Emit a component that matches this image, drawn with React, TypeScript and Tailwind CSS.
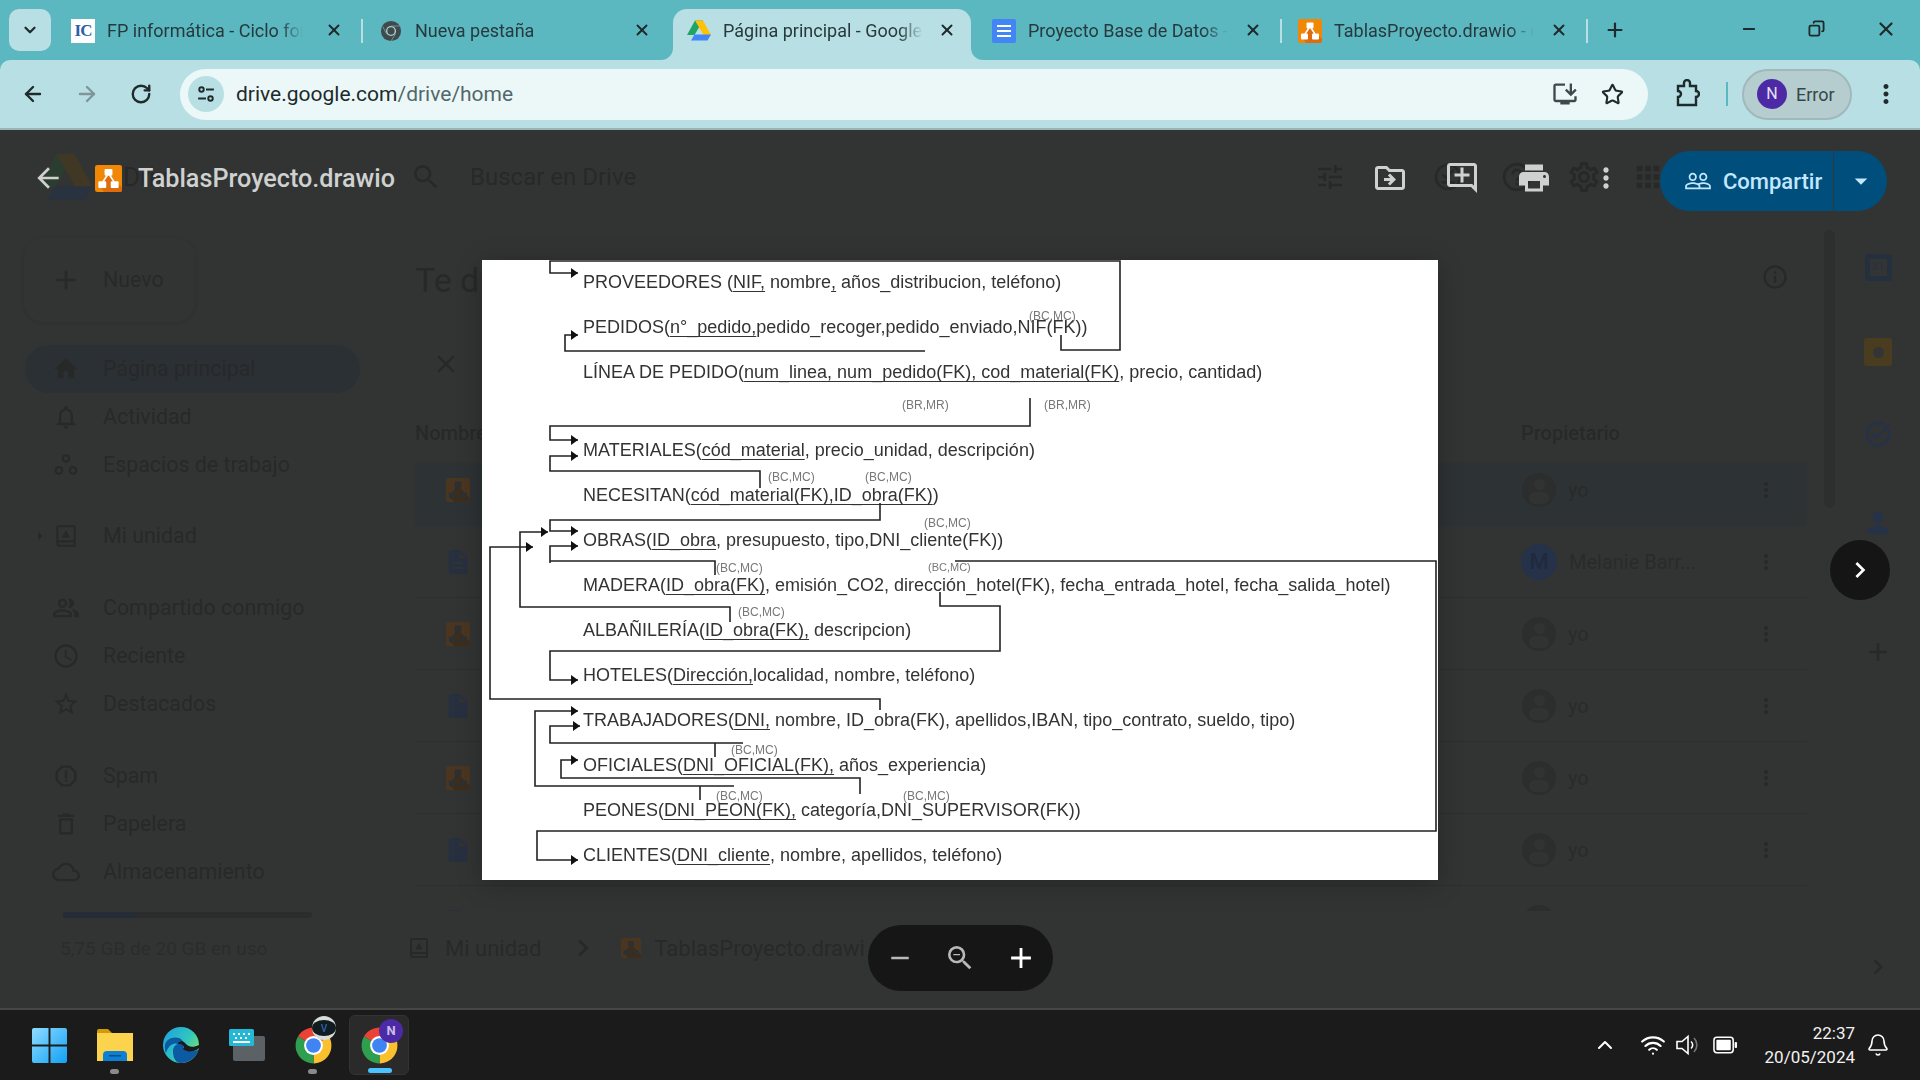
import React from "react";
import { ArrowLeft, ArrowRight, RotateCw, X, Plus, Minus, ChevronDown, ChevronUp, Star, Wifi, Bell, Copy } from "lucide-react";
import {
  MdAdd, MdHome, MdNotificationsNone, MdOutlinePeopleAlt, MdAccessTime, MdStarBorder, MdOutlineReport, MdDeleteOutline,
  MdOutlineCloud, MdPrint, MdOutlineAddComment, MdOutlineSettings, MdMoreVert, MdApps, MdPeopleOutline, MdArrowBack, MdSearch,
  MdClose, MdInfoOutline, MdArrowDropDown, MdChevronRight, MdZoomOut, MdRemove, MdTune, MdOutlineDriveFileMove,
  MdInsertDriveFile, MdInstallDesktop, MdArrowRight, MdOutlineTaskAlt, MdPerson, MdOutlineHelpOutline, MdOutlineOfflinePin,
  MdDescription,
} from "react-icons/md";

const Drawio = ({ className = "", dim = false }: { className?: string; dim?: boolean }) => (
  <svg viewBox="0 0 24 24" className={className}>
    <rect width="24" height="24" rx="2" fill={dim ? "#4a3520" : "#f08705"} />
    <path d="M12 8 L24 20 V22 a2 2 0 0 1 -2 2 H8 L4 18z" fill={dim ? "#3f2d1c" : "#df6c0c"} />
    <g fill={dim ? "#2f3130" : "#fff"}>
      <rect x="8.5" y="3.5" width="7" height="6" rx="1" />
      <rect x="3" y="14.5" width="7" height="6" rx="1" />
      <rect x="14" y="14.5" width="7" height="6" rx="1" />
    </g>
    <path d="M11 9 L7 15 M13 9 L17 15" stroke={dim ? "#2f3130" : "#fff"} strokeWidth="1.6" />
  </svg>
);

const DriveLogo = ({ className = "", dim = false }: { className?: string; dim?: boolean }) => (
  <svg viewBox="0 0 48 42" className={className}>
    <path d="M16 1 H32 L15 30 H0 z" fill={dim ? "#2b3d31" : "#1fa463"} />
    <path d="M16 1 H32 L48 30 H33 z" fill={dim ? "#403824" : "#ffc107"} />
    <path d="M8 41 L15 29 H48 L41 41 z" fill={dim ? "#29323f" : "#4285f4"} />
  </svg>
);

const MyDrive = ({ className = "" }: { className?: string }) => (
  <svg viewBox="0 0 24 24" className={className} fill="none" stroke="currentColor" strokeWidth="2">
    <path d="M4 19 V4 a1 1 0 0 1 1 -1 H19 a1 1 0 0 1 1 1 V21 H6 a2 2 0 0 1 0 -4 H20" />
    <path d="M9 13 L12 7.5 L15 13z" fill="currentColor" strokeWidth="1" />
  </svg>
);

const Chrome = ({ className = "" }: { className?: string }) => (
  <svg viewBox="0 0 48 48" className={className}>
    <path d="M24 24 L6.68 14 A20 20 0 0 1 41.32 14 z" fill="#ea4335" />
    <path d="M24 24 L41.32 14 A20 20 0 0 1 24 44 z" fill="#fbc02d" />
    <path d="M24 24 L24 44 A20 20 0 0 1 6.68 14 z" fill="#2e9e4f" />
    <circle cx="24" cy="24" r="10.5" fill="#fff" />
    <circle cx="24" cy="24" r="8.2" fill="#3f84f2" />
  </svg>
);

const GreyChrome = () => (
  <svg viewBox="0 0 48 48" className="size-[22px]">
    <circle cx="24" cy="24" r="22" fill="#3f4a4c" />
    <circle cx="24" cy="24" r="11" fill="#b8e0e4" opacity="0.9" />
    <circle cx="24" cy="24" r="8" fill="#3f4a4c" />
    <path d="M24 13 H44 M14 30 L6 14 M34 30 L24 46" stroke="#7d9194" strokeWidth="2" />
  </svg>
);

const Tab = ({ width, icon, label, textWidth, active, sep }: { width: string; icon: React.ReactNode; label: string; textWidth: string; active?: boolean; sep?: boolean }) => (
  <div className={`relative h-[51px] flex items-center pl-[14px] pb-[8px] shrink-0 ${width} ${active ? "bg-[#b8e0e4] rounded-t-[14px]" : ""}`}>
    {active && (
      <>
        <div className="absolute bottom-0 -left-[12px] size-[12px] bg-[#b8e0e4]">
          <div className="size-full bg-[#5bb8c1] rounded-br-[12px]" />
        </div>
        <div className="absolute bottom-0 -right-[12px] size-[12px] bg-[#b8e0e4]">
          <div className="size-full bg-[#5bb8c1] rounded-bl-[12px]" />
        </div>
      </>
    )}
    <div className="size-[24px] flex items-center justify-center shrink-0">{icon}</div>
    <div className={`ml-[12px] overflow-hidden whitespace-nowrap text-[18px] text-[#27393c] [mask-image:linear-gradient(to_right,black_88%,transparent)] ${textWidth}`}>{label}</div>
    <X className={`absolute top-[12px] size-[18px] text-[#1f2a2c] ${active ? "right-[15px]" : "right-[22px]"}`} strokeWidth={2.6} />
    {sep && <div className="absolute right-[2px] top-[10px] w-[2px] h-[24px] bg-[#b8e0e4]" />}
  </div>
);

const TabStrip = () => (
  <div className="h-[60px] bg-[#5bb8c1] flex items-end pl-[9px]">
    <div className="w-[42px] h-[42px] mb-[9px] mr-[6px] rounded-[10px] bg-[#b8e0e4] flex items-center justify-center shrink-0">
      <ChevronDown className="size-[18px] text-[#1f2a2c]" strokeWidth={3} />
    </div>
    <Tab
      width="w-[308px]"
      textWidth="w-[196px]"
      label="FP informática - Ciclo form"
      sep
      icon={
        <div className="size-[24px] bg-white flex items-center justify-center text-[#2b5fa8] text-[17px] font-bold font-['Liberation_Serif',serif] tracking-[-1px]">IC</div>
      }
    />
    <Tab width="w-[308px]" textWidth="w-[200px]" label="Nueva pestaña" icon={<GreyChrome />} />
    <Tab width="w-[298px] mr-[7px]" textWidth="w-[200px]" label="Página principal - Google" active icon={<DriveLogo className="w-[24px]" />} />
    <Tab
      width="w-[306px]"
      textWidth="w-[200px]"
      label="Proyecto Base de Datos -"
      sep
      icon={
        <div className="w-[24px] h-[24px] rounded-[2px] bg-[#4285f4] flex flex-col justify-center gap-[3px] px-[5px]">
          <div className="h-[2px] bg-white" />
          <div className="h-[2px] bg-white" />
          <div className="h-[2px] bg-white" />
        </div>
      }
    />
    <Tab width="w-[306px]" textWidth="w-[200px]" label="TablasProyecto.drawio - d" sep icon={<Drawio className="size-[24px]" />} />
    <div className="h-[51px] pb-[9px] flex items-center ml-[14px]">
      <Plus className="size-[22px] text-[#1f2a2c]" strokeWidth={2.4} />
    </div>
    <div className="ml-auto h-[60px] flex items-center pb-[3px]">
      <Minus className="size-[18px] text-[#1f2a2c] mr-[50px]" strokeWidth={2.4} />
      <Copy className="size-[17px] text-[#1f2a2c] mr-[50px] -scale-x-100" strokeWidth={2.6} />
      <X className="size-[22px] text-[#1f2a2c] mr-[23px]" strokeWidth={2.4} />
    </div>
  </div>
);

const Toolbar = () => (
  <div className="bg-[#5bb8c1]">
    <div className="h-[70px] bg-[#b8e0e4] rounded-t-[10px] border-b-[2px] border-[#9db4b4] flex items-center">
      <ArrowLeft className="size-[24px] ml-[21px] text-[#1f2a2c]" strokeWidth={2.4} />
      <ArrowRight className="size-[24px] ml-[30px] text-[#7f9698]" strokeWidth={2.4} />
      <RotateCw className="size-[22px] ml-[31px] text-[#1f2a2c]" strokeWidth={2.6} />
      <div className="ml-[28px] w-[1468px] h-[51px] rounded-full bg-[#ecf8f8] flex items-center pl-[8px]">
        <div className="size-[36px] rounded-full bg-[#b8e0e4] flex flex-col items-center justify-center gap-[5px]">
          <svg viewBox="0 0 16 16" className="size-[18px]" fill="none" stroke="#1f2a2c" strokeWidth="1.7">
            <circle cx="4" cy="4" r="2" />
            <path d="M8 4 H15 M1 12 H8" />
            <circle cx="12" cy="12" r="2" />
          </svg>
        </div>
        <div className="ml-[12px] mt-[1px] text-[21px] text-[#1d2a2c]">
          drive.google.com<span className="text-[#52686b]">/drive/home</span>
        </div>
        <MdInstallDesktop className="ml-auto size-[28px] text-[#3c4a4c]" />
        <Star className="ml-[22px] mr-[24px] size-[23px] text-[#1f2a2c]" strokeWidth={2.2} />
      </div>
      <svg viewBox="0 0 24 30" className="ml-[26px] w-[26px] h-[30px]" fill="none" stroke="#1f2a2c" strokeWidth="2.4">
        <path d="M3 7 H9 V4 a3 3 0 0 1 6 0 V7 H21 V12 a3 3 0 0 1 0 6 V26 H3 V18 a3 3 0 0 0 0 -6 z" />
      </svg>
      <div className="ml-[26px] w-[2px] h-[24px] bg-[#5bb8c1]" />
      <div className="ml-[14px] w-[110px] h-[51px] rounded-full bg-[#b6cdd0] border-[2px] border-[#a1b8ba] flex items-center pl-[13px]">
        <div className="size-[30px] rounded-full bg-[#4c2aa5] text-[#e7e0f5] text-[16px] flex items-center justify-center">N</div>
        <div className="ml-[9px] text-[18px] text-[#33474a]">Error</div>
      </div>
      <MdMoreVert className="ml-[19px] size-[30px] text-[#1f2a2c]" />
    </div>
  </div>
);

const NavItem = ({ icon, label, active }: { icon: React.ReactNode; label: string; active?: boolean }) => (
  <div className={`h-[48px] w-[335px] ml-[25px] rounded-full flex items-center pl-[27px] ${active ? "bg-[#2b3035]" : ""}`}>
    <div className="w-[28px] flex justify-center text-[#272928]">{icon}</div>
    <div className="ml-[23px] mt-[1px] text-[21.4px] text-[#272928]">{label}</div>
  </div>
);

const rows = [
  { id: 1, icon: <Drawio dim className="size-[24px]" />, selected: true },
  { id: 2, icon: <MdDescription className="size-[28px] -mx-[2px] text-[#26303f]" />, owner: "Melanie Barr..." },
  { id: 3, icon: <Drawio dim className="size-[24px]" /> },
  { id: 4, icon: <MdInsertDriveFile className="size-[28px] -mx-[2px] text-[#26303f]" /> },
  { id: 5, icon: <Drawio dim className="size-[24px]" /> },
  { id: 6, icon: <MdInsertDriveFile className="size-[28px] -mx-[2px] text-[#26303f]" /> },
  { id: 7, icon: <MdInsertDriveFile className="size-[28px] -mx-[2px] text-[#26303f]" /> },
];

const DriveLayer = () => (
  <div className="h-full flex flex-col text-[#272928]">
    <div className="h-[94px] flex items-center shrink-0">
      <DriveLogo dim className="w-[55px] ml-[38px]" />
      <div className="ml-[30px] text-[26px] w-[232px]">Drive</div>
      <MdSearch className="size-[32px] ml-[55px]" />
      <div className="ml-[28px] text-[24px]">Buscar en Drive</div>
      <div className="ml-auto flex items-center mr-[255px]">
        <MdTune className="size-[32px] mr-[86px]" />
        <MdOutlineOfflinePin className="size-[32px] mr-[36px]" />
        <MdOutlineHelpOutline className="size-[34px] mr-[32px]" />
        <MdOutlineSettings className="size-[36px] mr-[29px]" />
        <MdApps className="size-[34px]" />
      </div>
    </div>
    <div className="flex-1 flex min-h-0">
      <div className="w-[415px] shrink-0">
        <div className="ml-[24px] mt-[14px] w-[171px] h-[84px] rounded-[20px] shadow-[0_1px_4px_rgba(0,0,0,0.12)] flex items-center pl-[26px]">
          <MdAdd className="size-[32px]" />
          <div className="ml-[21px] mt-[1px] text-[21.4px]">Nuevo</div>
        </div>
        <div className="mt-[23px]">
          <NavItem active icon={<MdHome className="size-[28px]" />} label="Página principal" />
          <NavItem icon={<MdNotificationsNone className="size-[28px]" />} label="Actividad" />
          <NavItem
            icon={
              <svg viewBox="0 0 24 24" className="size-[26px]" fill="none" stroke="currentColor" strokeWidth="2">
                <circle cx="12" cy="6" r="3" />
                <circle cx="5.5" cy="17" r="3" />
                <circle cx="18.5" cy="17" r="3" />
              </svg>
            }
            label="Espacios de trabajo"
          />
          <div className="relative mt-[23px]">
            <MdArrowRight className="absolute left-[30px] top-[14px] size-[20px]" />
            <NavItem icon={<MyDrive className="size-[26px]" />} label="Mi unidad" />
          </div>
          <div className="mt-[24px]">
            <NavItem icon={<MdOutlinePeopleAlt className="size-[30px]" />} label="Compartido conmigo" />
            <NavItem icon={<MdAccessTime className="size-[30px]" />} label="Reciente" />
            <NavItem icon={<MdStarBorder className="size-[30px]" />} label="Destacados" />
          </div>
          <div className="mt-[24px]">
            <NavItem icon={<MdOutlineReport className="size-[30px]" />} label="Spam" />
            <NavItem icon={<MdDeleteOutline className="size-[30px]" />} label="Papelera" />
            <NavItem icon={<MdOutlineCloud className="size-[32px]" />} label="Almacenamiento" />
          </div>
        </div>
        <div className="ml-[63px] mt-[16px] w-[249px] h-[6px] rounded-full bg-[#2b2d2c] flex">
          <div className="w-[72px] rounded-full bg-[#252c38]" />
        </div>
        <div className="ml-[60px] mt-[17px] text-[19px] text-[#2a2c2b]">5,75 GB de 20 GB en uso</div>
      </div>
      <div className="w-[1391px] shrink-0 flex flex-col">
        <div className="h-[112px] flex items-center text-[34px] shrink-0">Te d</div>
        <div className="h-[56px] flex items-center pl-[16px] shrink-0">
          <MdClose className="size-[30px]" />
        </div>
        <div className="relative h-[62px] pt-[20px] flex items-center text-[20px] font-medium shrink-0">
          <div>Nombre</div>
          <div className="ml-auto w-[285px]">Propietario</div>
          <MdInfoOutline className="absolute right-[17px] -top-[129px] size-[28px]" />
        </div>
        <div className="h-[457px] overflow-hidden shrink-0 pt-[8px]">
          {rows.map((r) => (
            <div key={r.id} className={`flex items-center pl-[31px] ${r.selected ? "h-[64px] pb-[8px] bg-[#2d3235]" : "h-[72px] border-b border-[#2d2f2e]"}`}>
              {r.icon}
              <div className="ml-auto w-[285px] flex items-center">
                {r.owner ? (
                  <div className="size-[36px] rounded-full bg-[#25324a] text-[#1f2a3d] text-[22px] font-medium flex items-center justify-center">M</div>
                ) : (
                  <div className="size-[34px] ml-[1px] rounded-full bg-[#2c2e2d] flex flex-col items-center overflow-hidden">
                    <div className="mt-[6px] size-[11px] rounded-full bg-[#313332]" />
                    <div className="mt-[2px] w-[20px] h-[12px] rounded-full bg-[#313332]" />
                  </div>
                )}
                <div className="ml-[12px] text-[20px] text-[#292b2a]">{r.owner ?? "yo"}</div>
                <MdMoreVert className="ml-auto mr-[28px] size-[24px]" />
              </div>
            </div>
          ))}
        </div>
        <div className="flex-1 flex items-center pb-[23px] -ml-[8px] text-[22px]">
          <MyDrive className="size-[24px]" />
          <div className="ml-[14px]">Mi unidad</div>
          <MdChevronRight className="size-[34px] ml-[25px] mr-[21px]" />
          <Drawio dim className="size-[20px]" />
          <div className="ml-[13px]">TablasProyecto.drawi</div>
        </div>
      </div>
      <div className="w-[39px] shrink-0 pl-[18px] pt-[6px]">
        <div className="w-[11px] h-[278px] rounded-full bg-[#2d2f2e]" />
      </div>
      <div className="w-[66px] shrink-0 flex flex-col items-center">
        <div className="mt-[30px] size-[27px] rounded-[3px] bg-[#25303f] flex items-center justify-center">
          <div className="size-[17px] bg-[#333534] text-[11px] text-[#25303f] flex items-center justify-center">31</div>
        </div>
        <div className="mt-[57px] size-[28px] rounded-[3px] bg-[#4a3d1f] flex items-center justify-center">
          <div className="size-[11px] rounded-full bg-[#333534]" />
        </div>
        <MdOutlineTaskAlt className="mt-[53px] size-[30px] text-[#25324a]" />
        <MdPerson className="mt-[58px] size-[32px] text-[#25324a]" />
        <MdAdd className="mt-[98px] size-[30px]" />
        <MdChevronRight className="mt-[285px] size-[30px]" />
      </div>
    </div>
  </div>
);

const lines = [
  "M578 273 H550 V261 H1120 V350 H1061 V335",
  "M578 335 H565 V351 H925",
  "M578 440 H550 V426 H1030 V398",
  "M578 456 H550 V471 H760 V488",
  "M578 531 H550 V520 H880 V503",
  "M548 532 H520 V607 H730 V622",
  "M533 547 H490 V699 H880 V710",
  "M578 546 H550 V563 M550 561 H715 V575",
  "M578 680 H550 V651 H1000 V606 H940 V592",
  "M955 561 H1436 V831 H537 V860 H578",
  "M578 711 H535 V786 H734 M700 786 V800",
  "M580 726 H550 V743 H743 M715 743 V757",
  "M578 760 H561 V778 H860 V794",
];
const heads = [[578, 273], [578, 335], [578, 440], [578, 456], [578, 531], [548, 532], [533, 547], [578, 546], [578, 680], [578, 860], [578, 711], [580, 726], [578, 760]];

const Diagram = () => (
  <div className="absolute left-[482px] top-[130px] w-[956px] h-[620px] bg-white overflow-hidden shadow-[0_4px_24px_rgba(0,0,0,0.25)]">
    <div className="flex flex-col pl-[101px] text-[18px] text-[#333] whitespace-nowrap font-['Liberation_Sans',Arial,sans-serif] blur-[0.5px] [&_u]:underline-offset-[3px] [&_u]:[text-decoration-skip-ink:none]">
      <div className="h-[45px] flex items-center"><p>PROVEEDORES (<u>NIF,</u> nombre<u>,</u> años_distribucion, teléfono)</p></div>
      <div className="h-[45px] flex items-center"><p>PEDIDOS(<u>n°_pedido,</u>pedido_recoger,pedido_enviado,NIF(FK))</p></div>
      <div className="h-[45px] flex items-center"><p>LÍNEA DE PEDIDO(<u>num_linea, num_pedido(FK), cod_material(FK)</u>, precio, cantidad)</p></div>
      <div className="h-[33px]" />
      <div className="h-[45px] flex items-center"><p>MATERIALES(<u>cód_material</u>, precio_unidad, descripción)</p></div>
      <div className="h-[45px] flex items-center"><p>NECESITAN(<u>cód_material(FK),ID_obra(FK)</u>)</p></div>
      <div className="h-[45px] flex items-center"><p>OBRAS(<u>ID_obra</u>, presupuesto, tipo,DNI_cliente(FK))</p></div>
      <div className="h-[45px] flex items-center"><p>MADERA(<u>ID_obra(FK)</u>, emisión_CO2, dirección_hotel(FK), fecha_entrada_hotel, fecha_salida_hotel)</p></div>
      <div className="h-[45px] flex items-center"><p>ALBAÑILERÍA(<u>ID_obra(FK),</u> descripcion)</p></div>
      <div className="h-[45px] flex items-center"><p>HOTELES(<u>Dirección,</u>localidad, nombre, teléfono)</p></div>
      <div className="h-[45px] flex items-center"><p>TRABAJADORES(<u>DNI,</u> nombre, ID_obra(FK), apellidos,IBAN, tipo_contrato, sueldo, tipo)</p></div>
      <div className="h-[45px] flex items-center"><p>OFICIALES(<u>DNI_OFICIAL(FK),</u> años_experiencia)</p></div>
      <div className="h-[45px] flex items-center"><p>PEONES(<u>DNI_PEON(FK),</u> categoría,DNI_SUPERVISOR(FK))</p></div>
      <div className="h-[45px] flex items-center"><p>CLIENTES(<u>DNI_cliente</u>, nombre, apellidos, teléfono)</p></div>
    </div>
    <svg viewBox="482 260 956 620" className="absolute inset-0 w-full h-full" fill="none" stroke="#222" strokeWidth="1.6">
      {lines.map((d) => <path key={d} d={d} />)}
      {heads.map(([x, y]) => <path key={`${x}-${y}`} d={`M${x - 7} ${y - 5} L${x} ${y} L${x - 7} ${y + 5} z`} fill="#111" stroke="none" />)}
    </svg>
    <div className="absolute inset-0 font-['Liberation_Sans',Arial,sans-serif] text-[12px] text-[#777] blur-[0.3px]">
      <span className="absolute left-[547px] top-[47px]">(BC,MC)</span>
      <span className="absolute left-[420px] top-[136px]">(BR,MR)</span>
      <span className="absolute left-[562px] top-[136px]">(BR,MR)</span>
      <span className="absolute left-[286px] top-[208px]">(BC,MC)</span>
      <span className="absolute left-[383px] top-[208px]">(BC,MC)</span>
      <span className="absolute left-[442px] top-[254px]">(BC,MC)</span>
      <span className="absolute left-[234px] top-[299px]">(BC,MC)</span>
      <span className="absolute left-[446px] top-[299px] text-[11px]">(BC,MC)</span>
      <span className="absolute left-[256px] top-[343px]">(BC,MC)</span>
      <span className="absolute left-[249px] top-[481px]">(BC,MC)</span>
      <span className="absolute left-[234px] top-[527px]">(BC,MC)</span>
      <span className="absolute left-[421px] top-[527px]">(BC,MC)</span>
    </div>
  </div>
);

const ViewerLayer = () => (
  <div className="absolute inset-0">
    <div className="h-[94px] flex items-center text-[#cfd1d0]">
      <MdArrowBack className="size-[32px] ml-[32px] mt-[2px]" />
      <Drawio className="size-[27px] ml-[31px] mt-[2px]" />
      <div className="ml-[16px] mt-[3px] text-[25.2px] font-medium">TablasProyecto.drawio</div>
      <div className="ml-auto flex items-center mt-[2px]">
        <div className="w-[72px] flex justify-center"><MdOutlineDriveFileMove className="size-[36px]" /></div>
        <div className="w-[72px] flex justify-center"><MdOutlineAddComment className="size-[36px]" /></div>
        <div className="w-[72px] flex justify-center"><MdPrint className="size-[36px]" /></div>
        <div className="w-[72px] flex justify-center"><MdMoreVert className="size-[32px]" /></div>
      </div>
      <div className="ml-[18px] mr-[33px] mt-[8px] w-[227px] h-[60px] rounded-full bg-[#004e7b] flex items-center text-[#c2e7ff]">
        <MdPeopleOutline className="ml-[24px] size-[28px]" />
        <div className="ml-[11px] text-[22px] font-medium">Compartir</div>
        <div className="ml-[11px] h-full w-px bg-[#2f3a40]" />
        <MdArrowDropDown className="ml-[12px] size-[30px]" />
      </div>
    </div>
    <Diagram />
    <div className="absolute left-[868px] top-[795px] w-[185px] h-[66px] rounded-full bg-[#161616] flex items-center justify-between pl-[17px] pr-[15px] text-white">
      <MdRemove className="size-[30px] text-[#b9b9b9]" />
      <MdZoomOut className="size-[32px] text-[#b9b9b9]" />
      <MdAdd className="size-[34px]" />
    </div>
    <div className="absolute left-[1830px] top-[410px] size-[60px] rounded-full bg-[#151515] flex items-center justify-center">
      <MdChevronRight className="size-[32px] text-white" />
    </div>
  </div>
);

const TaskIcon = ({ children, dot, active }: { children: React.ReactNode; dot?: boolean; active?: boolean }) => (
  <div className={`relative w-[60px] h-[60px] mr-[6px] rounded-[6px] flex items-center justify-center ${active ? "bg-[#2a2a2a] border border-[#333]" : ""}`}>
    {children}
    {dot && <div className="absolute bottom-[1px] left-[25px] w-[9px] h-[5px] rounded-full bg-[#8a8a8a]" />}
    {active && <div className="absolute bottom-[1px] left-[18px] w-[24px] h-[5px] rounded-full bg-[#4cc2ff]" />}
  </div>
);

const Taskbar = () => (
  <div className="h-[72px] bg-[#1b1b1b] border-t-[2px] border-[#454746] flex items-center pl-[19px] text-white">
    <TaskIcon>
      <svg viewBox="0 0 36 36" className="size-[35px]">
        <defs>
          <linearGradient id="win" x1="0" y1="0" x2="1" y2="1">
            <stop offset="0" stopColor="#8fdcff" />
            <stop offset="1" stopColor="#12a0f5" />
          </linearGradient>
        </defs>
        <path d="M0 2 a2 2 0 0 1 2 -2 H17 V17 H0z M19 0 H34 a2 2 0 0 1 2 2 V17 H19z M0 19 H17 V36 H2 a2 2 0 0 1 -2 -2z M19 19 H36 V34 a2 2 0 0 1 -2 2 H19z" fill="url(#win)" />
      </svg>
    </TaskIcon>
    <TaskIcon dot>
      <svg viewBox="0 0 36 32" className="w-[36px] h-[32px]">
        <path d="M0 2 a2 2 0 0 1 2 -2 H11 L15 4 H0z" fill="#d29a06" />
        <rect y="4" width="36" height="28" fill="#fcd34d" />
        <path d="M6 32 V26 a4 4 0 0 1 4 -4 H26 a4 4 0 0 1 4 4 V32z" fill="#0f7fd4" />
        <rect x="12" y="26" width="12" height="1.5" fill="#074f90" />
      </svg>
    </TaskIcon>
    <TaskIcon>
      <svg viewBox="0 0 36 36" className="size-[36px]">
        <defs>
          <linearGradient id="edge" x1="0" y1="0" x2="1" y2="0.7">
            <stop offset="0" stopColor="#1d9fe0" />
            <stop offset="0.6" stopColor="#30c5c0" />
            <stop offset="1" stopColor="#7fe06a" />
          </linearGradient>
        </defs>
        <circle cx="18" cy="18" r="18" fill="url(#edge)" />
        <path d="M3 26 C-2 12 10 9 16 11 C21 13 22 18 20 21 C27 26 33 24 36 22 C33 32 24 36 18 36 C11 36 10 28 10 24 C10 20 13 17 15 17 C10 15 5 19 3 26z" fill="#0c59a4" />
        <path d="M15 17 C20 17 22 19 20 22 C26 26 32 25 36 21 C36 19 36 18 36 18 C30 21 25 20 22 16 C20 13 15 14 15 17z" fill="#1b1b1b" />
      </svg>
    </TaskIcon>
    <TaskIcon>
      <svg viewBox="0 0 36 32" className="w-[36px] h-[32px]">
        <rect x="4" y="7" width="32" height="25" rx="2" fill="#5c6166" />
        <rect width="25" height="17" rx="1.5" fill="#22b8d6" />
        <g fill="#fff">
          <rect x="4" y="4" width="2" height="2" /><rect x="9" y="4" width="2" height="2" /><rect x="14" y="4" width="2" height="2" /><rect x="19" y="4" width="2" height="2" />
          <rect x="6" y="8" width="2" height="2" /><rect x="11" y="8" width="2" height="2" /><rect x="16" y="8" width="2" height="2" />
          <rect x="4" y="12" width="17" height="2" />
        </g>
      </svg>
    </TaskIcon>
    <TaskIcon dot>
      <Chrome className="size-[43px]" />
      <div className="absolute left-[29px] top-[1px] size-[24px] rounded-full bg-[#101c1f] border-y-[4px] border-[#d8dcdc] blur-[0.4px] flex items-center justify-center">
        <span className="text-[10px] font-bold text-[#2c5a9a]">V</span>
      </div>
    </TaskIcon>
    <TaskIcon active>
      <Chrome className="size-[43px]" />
      <div className="absolute left-[29px] top-[3px] size-[24px] rounded-full bg-[#4c2aa5] text-[#c9bce8] text-[13px] font-bold flex items-center justify-center">N</div>
    </TaskIcon>
    <div className="ml-auto flex items-center">
      <ChevronUp className="size-[24px]" strokeWidth={2} />
      <Wifi className="size-[26px] ml-[23px]" strokeWidth={2} />
      <svg viewBox="0 0 26 24" className="ml-[9px] w-[26px] h-[24px]" fill="none" stroke="#fff" strokeWidth="1.6">
        <path d="M2 8.5 H7 L13 3.5 V20.5 L7 15.5 H2z" />
        <path d="M16 8.5 a4.5 4.5 0 0 1 0 7" />
        <path d="M19 5 a10 10 0 0 1 0 14" stroke="#777" />
      </svg>
      <svg viewBox="0 0 26 18" className="ml-[12px] w-[25px] h-[18px]">
        <rect x="1" y="1" width="20" height="16" rx="3" fill="none" stroke="#fff" strokeWidth="1.6" />
        <rect x="3.5" y="3.5" width="15" height="11" rx="1" fill="#fff" />
        <rect x="22.5" y="6" width="2.5" height="6" rx="1" fill="#fff" />
      </svg>
      <div className="ml-[27px] text-right text-[17px] leading-[24px] text-[#f2f2f2] font-['Roboto',sans-serif]">
        <div>22:37</div>
        <div>20/05/2024</div>
      </div>
      <Bell className="size-[24px] ml-[11px] mr-[30px]" strokeWidth={1.6} />
    </div>
  </div>
);

export default function App() {
  return (
    <div className="w-[1920px] h-[1080px] flex flex-col overflow-hidden font-['Roboto',sans-serif]">
      <TabStrip />
      <Toolbar />
      <div className="relative h-[878px] bg-[#323433] overflow-hidden">
        <DriveLayer />
        <ViewerLayer />
      </div>
      <Taskbar />
    </div>
  );
}
